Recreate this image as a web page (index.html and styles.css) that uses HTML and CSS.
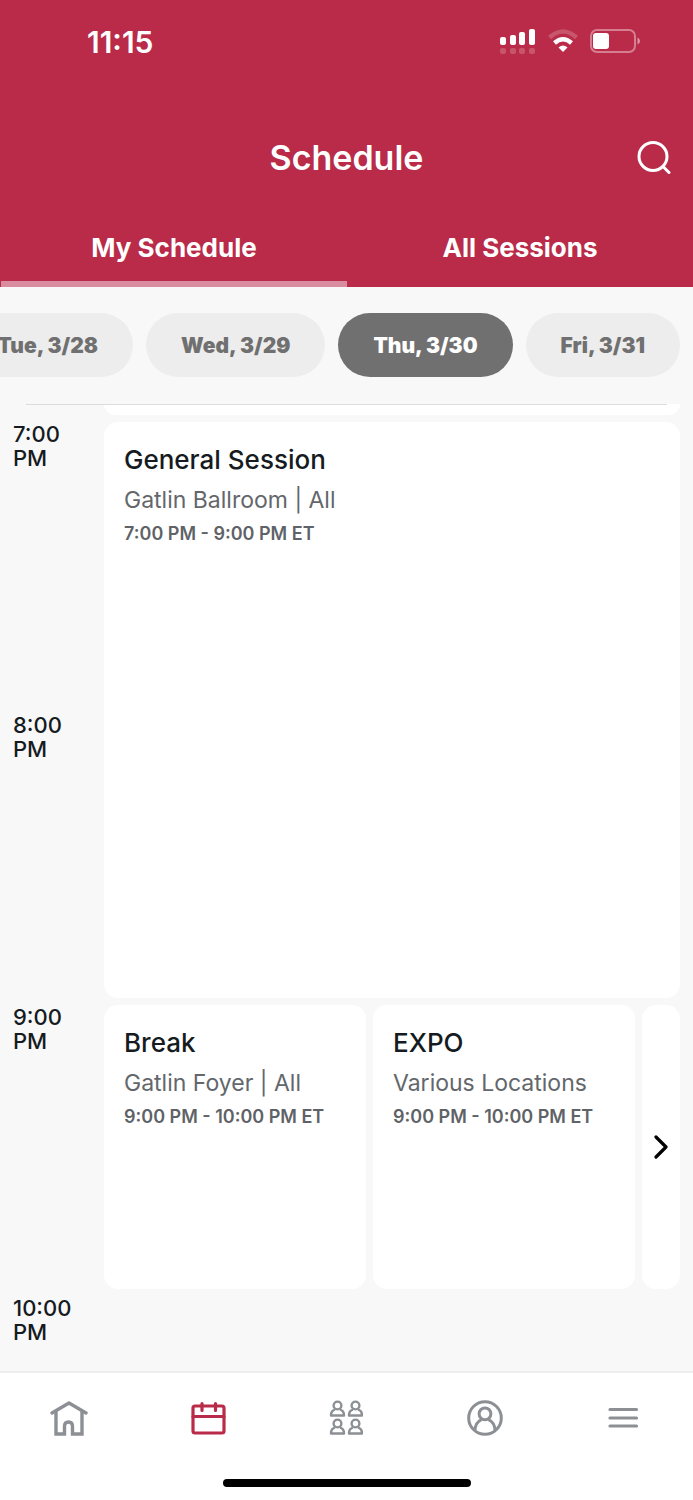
FILE: index.html
```html
<!DOCTYPE html>
<html lang="en">
<head>
<meta charset="utf-8">
<meta name="viewport" content="width=device-width, initial-scale=1">
<title>Schedule</title>
<link rel="stylesheet" href="styles.css">
</head>
<body>
<div class="app">
  <header class="header">
    <div class="status">
      <span class="clock">11:15</span>
      <div class="status-icons">
        <svg width="36" height="25" viewBox="0 0 36 25" fill="#fff" aria-hidden="true">
          <rect x="0" y="8" width="6" height="8" rx="2"/><rect x="10" y="6" width="6" height="10" rx="2"/><rect x="19" y="3" width="6" height="13" rx="2"/><rect x="29" y="0" width="6" height="16" rx="2"/>
          <g opacity=".2"><rect x="0" y="19" width="6" height="6" rx="2"/><rect x="10" y="19" width="6" height="6" rx="2"/><rect x="19" y="19" width="6" height="6" rx="2"/><rect x="29" y="19" width="6" height="6" rx="2"/></g>
        </svg>
        <svg width="30" height="24" viewBox="0 0 30 24" fill="none" stroke="#fff" stroke-width="4.400" aria-hidden="true">
          <path d="M1.500 8.500Q15-3.500 28.500 8.500" opacity=".2"/>
          <path d="M6.500 14Q15 6.500 23.500 14"/>
          <path d="M10.500 18.500Q15 14.500 19.500 18.500L15 23Z" fill="#fff" stroke="none"/>
        </svg>
        <svg width="51" height="24" viewBox="0 0 51 24" aria-hidden="true">
          <rect x="1" y="1" width="44" height="22" rx="6" fill="none" stroke="#fff" stroke-opacity=".4" stroke-width="2"/>
          <rect x="3" y="4" width="16" height="16" rx="3" fill="#fff"/>
          <path d="M47.500 8.500Q50 9.500 50 12T47.500 15.500Z" fill="#fff" opacity=".5"/>
        </svg>
      </div>
    </div>
    <div class="titlebar">
      <h1 class="title">Schedule</h1>
      <button class="search" type="button" aria-label="Search">
        <svg width="34" height="34" viewBox="0 0 34 34" fill="none" stroke="#fff" stroke-width="3" stroke-linecap="round" aria-hidden="true"><circle cx="16" cy="15.500" r="14"/><path d="M26 25.500l6 6"/></svg>
      </button>
    </div>
    <nav class="tabs">
      <button class="tab tab-active" type="button">My Schedule</button>
      <button class="tab" type="button">All Sessions</button>
    </nav>
  </header>

  <div class="days">
    <button class="day" type="button">Tue, 3/28</button>
    <button class="day" type="button">Wed, 3/29</button>
    <button class="day day-active" type="button">Thu, 3/30</button>
    <button class="day" type="button">Fri, 3/31</button>
  </div>

  <main class="timeline">
    <div class="card card-previous"></div>
    <div class="hour hour-7">7:00<br>PM</div>
    <article class="card card-general">
      <h2 class="name">General Session</h2>
      <p class="place">Gatlin Ballroom | All</p>
      <p class="time">7:00 PM - 9:00 PM ET</p>
    </article>
    <div class="hour hour-8">8:00<br>PM</div>
    <div class="hour hour-9">9:00<br>PM</div>
    <div class="parallel">
      <article class="card">
        <h2 class="name">Break</h2>
        <p class="place">Gatlin Foyer | All</p>
        <p class="time">9:00 PM - 10:00 PM ET</p>
      </article>
      <article class="card">
        <h2 class="name">EXPO</h2>
        <p class="place">Various Locations</p>
        <p class="time">9:00 PM - 10:00 PM ET</p>
      </article>
      <button class="card card-more" type="button" aria-label="More sessions">
        <svg width="16" height="24" viewBox="0 0 16 24" fill="none" stroke="#000" stroke-width="3.200" stroke-linecap="round" stroke-linejoin="round" aria-hidden="true"><path d="M3 2l10 10L3 22"/></svg>
      </button>
    </div>
    <div class="hour hour-10">10:00<br>PM</div>
  </main>

  <footer class="footer">
    <nav class="nav">
      <a class="nav-item" href="#home" aria-label="Home">
        <svg width="38" height="36" viewBox="0 0 38 36" fill="none" stroke="currentColor" stroke-width="3.400" stroke-linecap="round" aria-hidden="true"><path d="M2 13L19 3L36 13" stroke-linejoin="round"/><path d="M6 11.500V34H14.500V26.500Q14.500 22 18.500 22T22.500 26.500V34H32V11.500"/></svg>
      </a>
      <a class="nav-item nav-active" href="#schedule" aria-label="Schedule" aria-current="page">
        <svg width="36" height="34" viewBox="0 0 36 34" fill="none" stroke="currentColor" stroke-width="3.200" stroke-linecap="round" aria-hidden="true"><rect x="3" y="5" width="31" height="27" rx="2"/><path d="M3 15.500H34M12 2.500V9.500M25.500 2.500V9.500"/></svg>
      </a>
      <a class="nav-item" href="#people" aria-label="People">
        <svg width="34" height="36" viewBox="0 0 34 36" fill="none" stroke="currentColor" stroke-width="2.400" stroke-linejoin="round" aria-hidden="true">
          <defs><g id="person"><circle cx="8.500" cy="5.500" r="3.900"/><path d="M6 9.700C3.500 10.300 2 12 2 15.500H15C15 12 13.500 10.300 11 9.700"/></g></defs>
          <use href="#person"/><use href="#person" x="18"/><use href="#person" y="18"/><use href="#person" x="18" y="18"/>
        </svg>
      </a>
      <a class="nav-item" href="#profile" aria-label="Profile">
        <svg width="36" height="36" viewBox="0 0 36 36" fill="none" stroke="currentColor" stroke-width="3" aria-hidden="true"><circle cx="18" cy="18" r="16.300"/><circle cx="18" cy="13.800" r="5.900"/><path d="M8 31C8 25 10.500 21.500 14.500 19.700M28 31C28 25 25.500 21.500 21.500 19.700"/></svg>
      </a>
      <a class="nav-item" href="#menu" aria-label="Menu">
        <svg width="32" height="22" viewBox="0 0 32 22" fill="none" stroke="currentColor" stroke-width="3.200" stroke-linecap="round" aria-hidden="true"><path d="M2 2.500H28.500M2 11H28.500M2 19H28.500"/></svg>
      </a>
    </nav>
    <div class="home-bar"></div>
  </footer>
</div>
</body>
</html>
```
FILE: styles.css
```css
* { box-sizing: border-box; }
body {
  margin: 0;
  background: #f8f8f8;
  color: #151b21;
  font-family: Inter, "Liberation Sans", sans-serif;
}
button { border: 0; padding: 0; margin: 0; font-family: inherit; cursor: pointer; }
h1, h2, p { margin: 0; }
svg { display: block; flex: none; }

.app { display: flex; flex-direction: column; height: 100vh; overflow: hidden; }

.header { background: #b92b48; color: #fff; flex: none; }
.status {
  display: flex;
  justify-content: space-between;
  align-items: center;
  height: 82px;
  padding: 0 52px 0 87px;
}
.clock { padding-top: 2px; font-size: 30px; font-weight: 600; }
.status-icons { display: flex; align-items: center; gap: 12px; }
.titlebar {
  display: grid;
  grid-template-columns: 1fr auto 1fr;
  align-items: center;
  height: 125px;
  padding: 26px 22px 0;
}
.title { grid-column: 2; font-size: 34px; font-weight: 600; line-height: 40px; }
.search { justify-self: end; background: none; }
.tabs { display: grid; grid-template-columns: 1fr 1fr; padding: 0 0 0 1px; }
.tab {
  height: 80px;
  padding-top: 6px;
  border-bottom: 6px solid transparent;
  background: none;
  color: #fff;
  font-size: 26px;
  font-weight: 700;
}
.tab-active { border-bottom-color: #d98ba0; }

.days {
  display: flex;
  flex: none;
  justify-content: flex-end;
  gap: 13px;
  overflow: hidden;
  padding: 26px 13px 27px 0;
}
.day {
  flex: none;
  height: 64px;
  padding: 0 35px;
  border-radius: 32px;
  background: #ededed;
  color: #707070;
  font-size: 21px;
  font-weight: 900;
}
.day-active { background: #707070; color: #fff; }

.timeline {
  flex: 1;
  min-height: 0;
  overflow: hidden;
  display: grid;
  grid-template-columns: 91px 1fr;
  grid-template-rows: 11px 284px 285px 284px auto;
  row-gap: 7px;
  padding: 0 13px;
}
.timeline::before {
  content: "";
  grid-column: 1 / 3;
  grid-row: 1;
  height: 1px;
  margin: 0 13px;
  background: #dcdcdc;
  z-index: 1;
}
.hour { grid-column: 1; font-size: 22px; font-weight: 500; line-height: 24px; }
.hour-7 { grid-row: 2; }
.hour-8 { grid-row: 3; }
.hour-9 { grid-row: 4; }
.hour-10 { grid-row: 5; }
.card { background: #fff; border-radius: 14px; padding: 20px; min-width: 0; }
.card-previous { grid-column: 2; grid-row: 1; padding: 0; border-radius: 0 0 14px 14px; }
.card-general { grid-column: 2; grid-row: 2 / 4; }
.parallel { grid-column: 2; grid-row: 4; display: grid; grid-template-columns: 1fr 1fr 38px; gap: 7px; }
.card-more { display: grid; place-items: center; padding: 0; }
.name { font-size: 26px; font-weight: 500; line-height: 36px; }
.place { margin-top: 5px; color: #63676b; font-size: 23px; line-height: 34px; }
.time { margin-top: 5px; color: #5f6367; font-size: 18px; font-weight: 600; line-height: 24px; }

.footer { flex: none; background: #fff; border-top: 2px solid #eee; }
.nav { display: grid; grid-template-columns: repeat(5, 1fr); height: 90px; }
.nav-item { display: grid; place-items: center; color: #8c9094; }
.nav-active { color: #b92b48; }
.home-bar { width: 248px; height: 8px; margin: 16px auto 13px; border-radius: 4px; background: #000; }
```
